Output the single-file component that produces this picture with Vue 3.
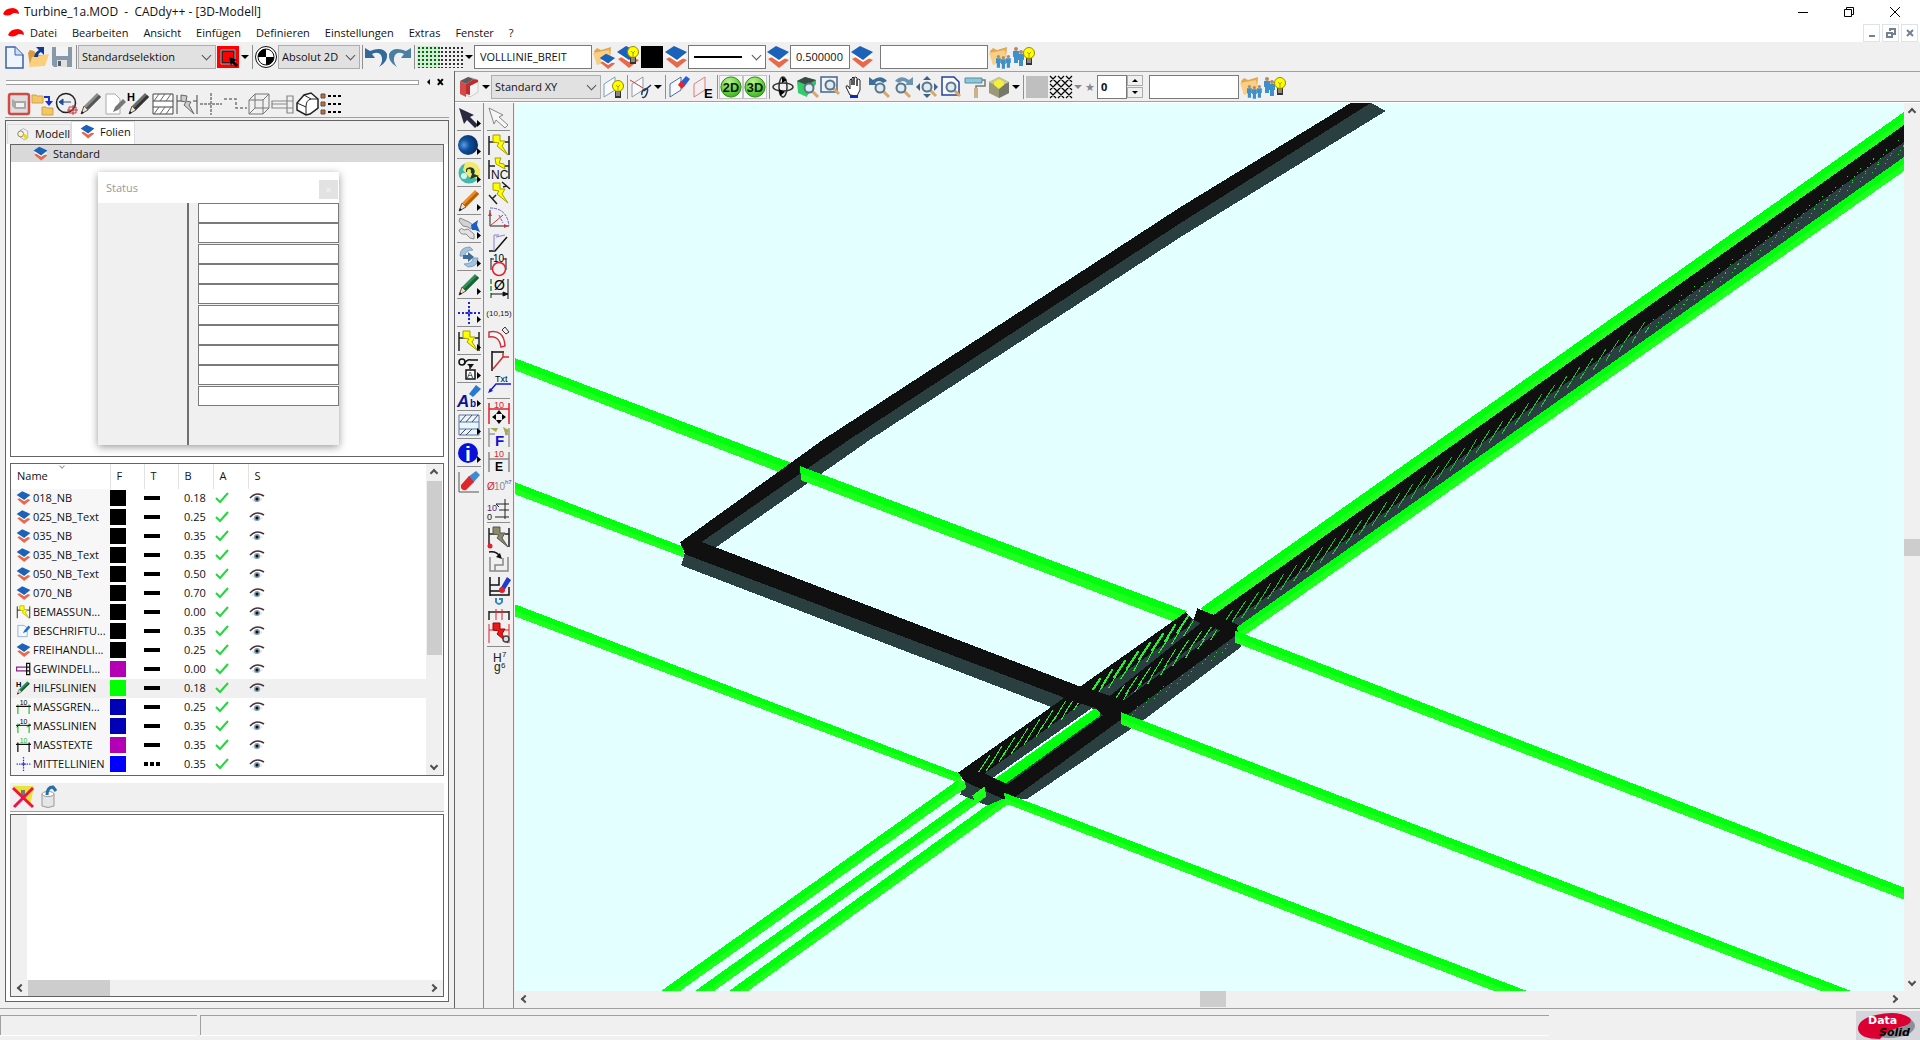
<script setup>
const layers =
  '<path d="M2 14 L10 10 L23 15 L13 23Z" fill="#e8694a"/><path d="M2 10 L12 8 L23 11 L13 17Z" fill="#fff"/><path d="M1 7 L10 1 L23 7 L13 15Z" fill="#1c62b8"/>'
const bulb = (x, y) =>
  `<g transform="translate(${x} ${y})"><path d="M3 10h6v8H3z" fill="#333"/><path d="M4 13h4M4 15h4" stroke="#ddd"/><circle cx="6" cy="6" r="5.500" fill="#ff0" stroke="#998a00"/><path d="M4 5l2 2 2-2M6 7v4" stroke="#b59b00" fill="none"/></g>`
const folder =
  '<path d="M2 6 L5 3 L9 5 L19 2 L18 14 L5 19Z" fill="#e2a94f"/><path d="M5 20 L1 8 L17 5 L19 16Z" fill="#f8cf85"/>'
const man = (x, y, k = 1) =>
  `<g transform="translate(${x} ${y}) scale(${k})"><circle cx="3" cy="2" r="2" fill="#b08a6a"/><path d="M0 4h6v6H5v6H1v-6H0z" fill="#3f8fc8"/></g>`
const lens = (x, y) =>
  `<g transform="translate(${x} ${y})"><path d="M8 8l6 6" stroke="#d8a76a" stroke-width="3"/><circle cx="5" cy="5" r="4.500" fill="#dcebf4" stroke="#5d7485" stroke-width="2"/></g>`
const pencil = (c, d) =>
  `<path d="M2 22l3-8 4 4z" fill="#f3dcc0" stroke="#555" stroke-width="1"/><path d="M2 22l1-3 2 2z" fill="#111"/><path d="M5 14L18 1l4 4L9 18z" fill="${c}"/><path d="M7 16L20 3l2 2L9 18z" fill="${d}"/>`
const zig = (c, s) =>
  `<path d="M6 2l7 0 0 6 5 0-3 5 6 9-11-9 2-3-6-1z" fill="${c}" stroke="${s}" stroke-width="1"/>`
const dim = (c, x) => `<path d="M2 3v19M22 3v19M2 9h6M18 9h4" stroke="${c}" stroke-width="${x}" fill="none"/>`
const plane = (c) => `<path d="M3 9L14 2v13L3 22z" fill="#f7fbff" stroke="${c}"/>`
const t = (x, y, s, c, txt, extra = '') =>
  `<text x="${x}" y="${y}" font-size="${s}" fill="${c}" font-family="Liberation Sans, Arial, sans-serif" ${extra}>${txt}</text>`

const icons = {
  new: '<path d="M4 2h9l8 8v13H4z" fill="#eef5ff" stroke="#3a5fa8" stroke-width="1.500"/><path d="M13 2v8h8" fill="#cfe0fa" stroke="#3a5fa8"/>',
  open: '<path d="M2 8l2-3 4 1 3 4h9l-2 10-14 1z" fill="#d99a3a"/><path d="M3 22l3-10 17-3-4 12z" fill="#fbcf7c"/><path d="M8 12q1-5 5-7l-3-3h8v8l-3-3q-3 1-3 5z" fill="#103a94"/>',
  save: '<path d="M2 2h20v20H4l-2-2z" fill="#8798a8"/><path d="M6 2h12v9H6z" fill="#f4f4f4"/><path d="M7 15h10v7H7z" fill="#e0e0e0"/><path d="M8 16h3v5H8z" fill="#50606e"/>',
  select: '<path d="M1 1h22v22H1z" fill="#f00"/><path d="M6 6h12v12H6z" fill="none" stroke="#402020" stroke-width="2"/><path d="M5 5h14v14H5z" fill="none" stroke="#7fb3c0"/><path d="M13 12l8 3-3 1 4 4-2 2-4-4-1 3z" fill="#000"/>',
  target: '<circle cx="12" cy="12" r="10.500" fill="#fff" stroke="#111"/><circle cx="12" cy="12" r="8" fill="#fff" stroke="#111"/><path d="M12 12V4a8 8 0 0 0-8 8zM12 12v8a8 8 0 0 0 8-8z" fill="#000"/>',
  undo: '<path d="M1 3v10h10L8 9q6-3 9 1 3 6-2 12 9-5 8-13-4-8-17-3L1 3z" fill="#33699a"/>',
  redo: '<path d="M23 3v10H13l3-4q-6-3-9 1-3 6 2 12-9-5-8-13 4-8 17-3z" fill="#4a7fa3"/>',
  folderLayers: folder + '<g transform="translate(7 8) scale(.7)">' + layers + '</g>',
  layers,
  layersBulb: layers + bulb(11, 1),
  black: '<path d="M1 1h22v22H1z" fill="#000"/>',
  folderPeople: folder + man(8, 10, 0.8) + man(13, 11, 0.8) + man(18, 10, 0.8),
  peopleBulb: man(1, 2) + man(6, 5) + bulb(11, 2),
  red3d: '<path d="M4 6l8-4 9 3v12l-8 5-4-2V9z" fill="#f4f4f4" stroke="#ccc"/><path d="M9 9l8-5 4 1v2l-8 4v9l-4-1z" fill="#c22b2b"/><path d="M3 6l8-4 6 2-8 5z" fill="#5c5c5c"/><path d="M3 6l6 3v13l-6-3z" fill="#d24a4a"/>',
  planeBulb: plane('#7d9dc0') + bulb(11, 5),
  planeLink: plane('#999') + '<path d="M1 5l13 8" stroke="#d33"/><path d="M13 20q-1-4 3-6t2 4-5 4M15 16l7-6" stroke="#223a5c" stroke-width="1.500" fill="none"/>',
  planeErase: plane('#4a6c98') + '<path d="M12 9l7-8 4 3-6 8z" fill="#2a5fd0"/><path d="M11 10l3-4 4 4-3 4z" fill="#e22"/>',
  planeE: '<path d="M3 9L14 2v13L3 22z" fill="none" stroke="#e07a7a"/>' + t(13, 23, 13, '#000', 'E', 'font-weight="bold"'),
  d2: '<circle cx="12" cy="12" r="11" fill="url(#gr)" stroke="#2b7d10"/>' + t(3, 17, 14, '#061f04', '2D', 'font-weight="bold"'),
  d3: '<circle cx="12" cy="12" r="11" fill="url(#gr)" stroke="#2b7d10"/>' + t(3, 17, 14, '#061f04', '3D', 'font-weight="bold"'),
  rotate: '<ellipse cx="12" cy="12" rx="10" ry="4" fill="none" stroke="#333" stroke-width="1.500"/><ellipse cx="12" cy="12" rx="4" ry="10" fill="none" stroke="#333" stroke-width="1.500"/><path d="M8 14l6 3-5 4zM16 5l-5-3v6z" fill="#000"/>',
  boxZoom: '<path d="M2 6l8-4 11 3v4l-9 12-9-4z" fill="#34c266"/><path d="M2 6l8-4 11 3-9 5z" fill="#3b4a44"/><path d="M3 8l9 3v11l-9-4z" fill="#2fd06a"/>' + lens(9, 8),
  zoomWin: '<path d="M2 2h16v15H2z" fill="#eef3f8" stroke="#46648c" stroke-width="1.500"/>' + lens(6, 5),
  hand: '<path d="M7 20L3 12q0-2 2-1l2 3V5q1-2 2 0v5-7q1-2 2 0v7-7q2-2 3 0v8-6q2-2 3 0v10l-3 6z" fill="#fff" stroke="#222"/><path d="M7 20h8v3H7z" fill="#0a2bc0"/>',
  zoomBack: lens(8, 8) + '<path d="M2 2v8h8L8 8q4-4 8 0l4-2q-6-7-14-1z" fill="#3b6f9c"/>',
  zoomFwd: lens(5, 8) + '<path d="M22 2v8h-8l2-2q-4-4-8 0L4 6q6-7 14-1z" fill="#6c93b0"/>',
  zoomAll: '<path d="M12 1l4 4H8zM12 23l4-4H8zM1 12l4-4v8zM23 12l-4-4v8z" fill="#3b648c"/>' + lens(7, 7),
  zoomPage: '<path d="M3 2h12l5 5v13H3z" fill="#f6f9ff" stroke="#26409a" stroke-width="1.500"/>' + lens(7, 7),
  roller: '<path d="M2 3h17v5H2z" fill="#8fc6d8" stroke="#508fa5"/><path d="M19 5h3v6H13v3" fill="none" stroke="#777" stroke-width="1.500"/><path d="M11 13h4v10h-4z" fill="#cdb18a"/>',
  cube: '<path d="M2 7l10-5 10 5v11l-10 5L2 18z" fill="#9a9a7a"/><path d="M12 12l10-5v11l-10 5z" fill="#77776a"/><path d="M2 7l10-5 10 5-10 5z" fill="#c9c98a"/><path d="M7 7l5-3 5 3v3l-5 4-5-4z" fill="#f5f03a"/>',
  grey: '<path d="M1 1h22v22H1z" fill="#bfbfbf"/>',
  hatch: '<path d="M1 7l6-6M1 15L15 1M1 23L23 1M9 23L23 9M17 23l6-6M17 1l6 6M9 1l14 14M1 1l22 22M1 9l14 14M1 17l6 6" stroke="#000" stroke-width="1.200"/>',
  panelRed: '<rect x="2" y="2" width="20" height="20" rx="2" fill="#ddd" stroke="#cf4b43" stroke-width="2.500"/><path d="M5 7l3 2h11v8H8l-3-3z" fill="#a8a8a8"/><path d="M9 11h8v4H9z" fill="#f2f2f2"/>',
  folders: '<path d="M1 3h4l1 1h6v7H1zM11 15h4l1 1h6v7H11z" fill="#f0c868" stroke="#d5a040"/><path d="M13 5h5v5" stroke="#1733c4" stroke-width="2" fill="none"/><path d="M14 9h8l-4 5z" fill="#1733c4"/>',
  clock: '<circle cx="11" cy="11" r="9.500" fill="none" stroke="#222" stroke-width="1.500"/><path d="M4 10h12M4 10l4-3v6z" stroke="#1c4f95" fill="#1c4f95"/><path d="M14 15h7v6h-7zM12 18h11M18 13v10" stroke="#c33" fill="none"/>',
  pencilGrey: pencil('#8b8b8b', '#555'),
  pagePencil: '<path d="M3 2h9l5 5v15H3z" fill="#fff" stroke="#aaa"/><path d="M10 20l2-5L20 7l3 3-8 8z" fill="#777"/>',
  hPencil: pencil('#6a6a6a', '#333') + t(0, 9, 11, '#000', 'H', 'font-weight="bold"'),
  hatchBox: '<path d="M2 2h20v20H2zM2 9h20M2 15h20" fill="#fff" stroke="#444"/><path d="M3 9l5-7M9 9l5-7M15 9l5-7M3 22l5-7M9 22l5-7M15 22l5-7" stroke="#666"/>',
  dimGrey: dim('#444', 1) + '<path d="M6 3l6 1-1 5 5 1-2 3 5 9-10-9 2-3-5-1z" fill="#ccc" stroke="#666"/>',
  crossGrey: '<path d="M1 12h22M12 1v22" stroke="#777" stroke-width="1.500" stroke-dasharray="3 1"/>',
  stepGrey: '<path d="M1 7h12v9h11" fill="none" stroke="#777" stroke-width="1.500" stroke-dasharray="3 2"/>',
  wireBox: '<path d="M2 8h14v14H2zM8 2h14v14H8zM2 8l6-6M16 8l6-6M2 22l6-6M16 22l6-6" fill="none" stroke="#777"/>',
  bolt: '<path d="M1 9h15v7H1zM1 12h15M16 4h6v17h-6zM16 9h6M16 16h6" fill="none" stroke="#888" stroke-width="1.200"/>',
  prism: '<path d="M2 11l7-8 7-2 7 6v9l-8 6-4 1-9-5z" fill="#fff" stroke="#222" stroke-width="1.500"/><path d="M2 11l9 4v8M11 15q0-7 5-8l7 0M9 3l7 4" fill="none" stroke="#222"/>',
  list: '<path d="M2 2h4v4H2zM2 10h4v4H2zM2 18h4v4H2z" fill="#c96a2c" stroke="#555"/><path d="M9 4h14M9 12h14M9 20h14" stroke="#000" stroke-width="2" stroke-dasharray="3 2"/>',
  arrowDark: '<path d="M2 3l15 7-4 2 8 8-3 3-8-8-3 4z" fill="#2b2940"/>',
  arrowLight: '<path d="M2 3l14 7-4 2 9 8-3 3-9-8-2 4z" fill="#f6f6f6" stroke="#888"/>',
  sphere: '<circle cx="11" cy="12" r="10" fill="url(#gb)"/>',
  snake: '<circle cx="12" cy="12" r="10.500" fill="#45b8ac"/><path d="M8 2a10.500 10.500 0 0 1 13 16l-9-2-6-7z" fill="#f2ea6e"/><path d="M9 8q3-3 7-1 3 3 1 6l5 2-9 3 2-5q-1-3-6-2" fill="#1d3a2c"/><circle cx="12" cy="10" r="2" fill="#f2ea6e"/><circle cx="7" cy="15" r="3" fill="#d4f4ec"/>',
  pencilOrange: pencil('#f08a1c', '#b85d08'),
  pliers: '<path d="M3 1l9 4 4 3-2 4-3-2-5-1-4-5z" fill="#d2d2d2" stroke="#888"/><path d="M14 8l7-5-1 5 3 7-5-2-3 0z" fill="#1c5fc6"/><path d="M2 13q3-3 5 0l4-1 6 5v5l-4-1-4-4q-6 1-7-4z" fill="#e2e2e2" stroke="#888"/>',
  cycle: '<path d="M3 11Q3 2 13 2l3 3q-8 0-8 6zM21 13q0 9-10 9l-4-3q9 0 9-6z" fill="#a3c2dc" stroke="#7ea2c2"/><path d="M6 10h5V7l6 5-6 5v-3H6z" fill="#3d6d96"/>',
  pencilGreen: pencil('#2f8f55', '#1a5f36'),
  crossBlue: '<path d="M1 12h22M12 1v22" stroke="#2222e0" stroke-width="2" stroke-dasharray="2 2"/><path d="M8 12h8M12 8v8" stroke="#2222e0"/>',
  dimYellow: dim('#222', 1.5) + zig('#ff0', '#a0a000'),
  symbolA: '<circle cx="5" cy="5" r="3" fill="none" stroke="#111" stroke-width="1.500"/><path d="M7 7q3-5 7-4h7M13 7v5" stroke="#111" stroke-width="1.500" fill="none"/><path d="M10 7h7l-3 4z" fill="#111"/><path d="M9 13h9v9H9z" fill="#fff" stroke="#111" stroke-width="1.500"/>' + t(10, 21, 9, '#000', 'A'),
  textAb: '<path d="M12 9L19 0l5 4-8 8z" fill="#2879cf"/>' + t(0, 22, 17, '#0b1594', 'A', 'font-weight="bold" font-style="italic"') + t(13, 22, 10, '#0b1594', 'b', 'font-weight="bold"'),
  hatchBlue: '<path d="M2 2h20v20H2z" fill="#eaf4fb" stroke="#5577a5"/><path d="M2 9h20M2 16h20" stroke="#5577a5"/><path d="M3 9l6-7M9 9l6-7M15 9l6-7M3 22l6-6M9 22l6-6" stroke="#446"/>',
  info: '<circle cx="11" cy="12" r="10" fill="#0a10d8"/>' + t(8, 20, 21, '#fff', 'i', 'font-weight="bold"'),
  eraser: '<path d="M2 3v20h20" stroke="#555" fill="none"/><path d="M11 8l8-6 4 4-7 8z" fill="#3f8bd0"/><path d="M4 16l8-9 5 6-8 8q-6 1-5-5z" fill="#e0262a"/>',
  dimNC: dim('#222', 1.5) + '<path d="M8 1h6l-2 5 5 1 1 5-9-5z" fill="#ff0" stroke="#a0a000"/>' + t(4, 22, 12, '#111', 'NC'),
  dimTilt: '<path d="M2 14l8 9M15 1l8 7M5 18l4-4M16 6l4-1" stroke="#222" stroke-width="1.500"/>' + zig('#ff0', '#a0a000'),
  angle: '<path d="M3 21V5M3 21h19" stroke="#222" fill="none"/><path d="M3 21L16 10" stroke="#c33"/><path d="M3 3q17 0 19 18M12 10l4 8" stroke="#6a5fc8" fill="none" stroke-dasharray="3 1"/><path d="M3 7l2 4H1zM21 21l-4-2v4z" fill="#c33"/>',
  slope: '<path d="M2 22h6L20 8" stroke="#111" fill="none" stroke-width="1.500"/><path d="M7 22V6h5M9 8l9-2" stroke="#8a80d0" fill="none"/>',
  dia10: '<path d="M4 5v12M19 5v12M4 6h3M16 6h3" stroke="#111"/><circle cx="12" cy="16" r="6.500" fill="none" stroke="#e0202a" stroke-width="1.500"/>' + t(6, 9, 10, '#000', '10'),
  diaDim: '<path d="M4 2v21" stroke="#2a8d3a" stroke-width="1.500" stroke-dasharray="5 2"/><path d="M21 2v20M4 17h17M21 17l-5-2v4z" stroke="#111" fill="#111"/>' + t(7, 13, 14, '#000', 'Ø'),
  coord: t(12, 15, 8, '#222', '(10,15)', 'text-anchor="middle"'),
  arcRed: '<path d="M2 7q15-3 16 14l-4 1Q12 10 2 12z" fill="#fff" stroke="#d2303a" stroke-width="1.500"/><path d="M15 5l3-3 4 5-3 2z" fill="none" stroke="#333"/>',
  triangle: '<path d="M5 2v20M5 3h12" stroke="#111" stroke-width="1.500" fill="none"/><path d="M6 20L16 8V4M16 8h6" stroke="#d22b2b" fill="none" stroke-width="1.500"/>',
  leader: '<path d="M3 18l6-7h15" stroke="#1717d8" stroke-width="1.500" fill="none"/><path d="M1 20l5-2-3-3z" fill="#1717d8"/>' + t(8, 9, 9, '#000', 'Txt'),
  dimArrows: '<path d="M2 2v21M22 2v21M2 8h20" stroke="#e0202a" stroke-width="1.500"/><path d="M12 9l3 4H9zM12 23l3-4H9zM5 16l4-3v6zM19 16l-4-3v6z" fill="#000"/>' + t(7, 7, 9, '#e0202a', '10'),
  dimF: dim('#999', 1.5) + '<path d="M3 3h8l-2 4zM16 2l6 3-3 6z" fill="#a8a850"/>' + t(8, 21, 15, '#1515d0', 'F', 'font-weight="bold"'),
  dimE: '<path d="M2 3v20M22 3v20M2 10h20" stroke="#888" stroke-width="1.500"/>' + t(7, 8, 9, '#e0202a', '10') + t(8, 22, 12, '#000', 'E', 'font-weight="bold"'),
  fit: t(0, 17, 10, '#e0202a', 'Ø') + t(7, 17, 10, '#888', '10') + t(18, 11, 6, '#4a3ab8', 'h7'),
  ordinate: '<path d="M18 2v20M9 7h13M12 13h10M8 20h14M9 7l3 3" stroke="#222" fill="none"/>' + t(0, 14, 9, '#5a1f7a', '10') + t(0, 23, 9, '#111', '0'),
  dimDot: dim('#222', 1.5) + zig('#8a8a66', '#555') + '<circle cx="3" cy="21" r="2.500" fill="#e0202a"/>',
  move: '<path d="M3 8v14h18V8M8 22v-6h8V9" stroke="#888" fill="none" stroke-width="1.500"/><path d="M2 3q8-1 10 4" stroke="#111" stroke-width="1.500" fill="none"/><path d="M15 10l-6-2 4-4z" fill="#111"/>',
  chain: '<path d="M3 4v19M12 4v8H3M3 18h10M3 22h19v-8" stroke="#111" fill="none" stroke-width="1.500"/><path d="M13 16l7-12 4 3-7 11z" fill="#2039d0"/><circle cx="15" cy="17" r="3" fill="#e0202a"/>',
  split: '<path d="M2 14v9M22 14v9M2 15h20" stroke="#222" stroke-width="1.500"/><path d="M9 12v11M15 12v11M9 15h6" stroke="#e0202a"/><path d="M9 1v4q3 4 6 0V2h-3" fill="none" stroke="#3387c8" stroke-width="2"/>',
  dimRed: dim('#e0202a', 1) + zig('#e81a1a', '#a00') + '<circle cx="19" cy="18" r="3" fill="#ddd" stroke="#444" stroke-width="1.500"/>',
  tolerance: t(6, 13, 12, '#222', 'H') + t(15, 8, 8, '#222', '7') + t(7, 22, 12, '#222', 'g') + t(14, 19, 8, '#222', '6'),
  note: '<path d="M3 3h10l5 4v14H3z" fill="#f5f9ff" stroke="#6b8cc8"/><path d="M11 15l3-5 6-7 3 3-6 7z" fill="#1f6fd0"/>',
  thread: '<path d="M1 9h16v6H1z" fill="#fff" stroke="#90208a" stroke-width="2"/><path d="M17 3h5v18h-5zM17 9h5M17 15h5" fill="#fff" stroke="#111" stroke-width="2"/>',
  hGreen: pencil('#2f8f55', '#1a5f36') + t(0, 10, 12, '#000', 'H', 'font-weight="bold"'),
  mBorder: '<path d="M3 8v15M21 8v15" stroke="#2ac62a" stroke-width="2"/><path d="M0 11h24" stroke="#111" stroke-width="2"/>' + t(6, 8, 11, '#000', '10'),
  mLine: '<path d="M3 8v15M21 8v15" stroke="#2ac62a" stroke-width="2"/><path d="M0 11h24M1 14l5-5M18 14l5-5" stroke="#111" stroke-width="1.500"/>' + t(6, 8, 11, '#000', '10'),
  mText: '<path d="M3 8v15M21 8v15M0 11h24" stroke="#111" stroke-width="2"/>' + t(6, 8, 11, '#1fb51f', '10'),
  clear: '<path d="M2 1h21L19 22z" fill="#e8e337"/><path d="M10 5h4v8h-4z" fill="#777"/><path d="M2 3l20 19M22 3L3 22" stroke="#ee1248" stroke-width="3"/>',
  bin: '<path d="M4 9h12v12q-6 3-12 0z" fill="#e5e5e5" stroke="#999"/><ellipse cx="10" cy="9" rx="6" ry="2.500" fill="#fff" stroke="#999"/><path d="M9 10q0-8 6-8l3 4" fill="none" stroke="#2a6ca8" stroke-width="3"/>',
  model: '<path d="M7 5l6-3 7 4v12l-6 3-7-5z" fill="#f3f3f3" stroke="#888"/><circle cx="8" cy="11" r="5" fill="#fff6c0" stroke="#777" stroke-width="1.500"/><path d="M13 10l7 4-2 8-5-5z" fill="#e8dc20"/>',
}

const menus = ['Datei', 'Bearbeiten', 'Ansicht', 'Einfügen', 'Definieren', 'Einstellungen', 'Extras', 'Fenster', '?']
const dockTools = ['panelRed', 'folders', 'clock', 'pencilGrey', 'pagePencil', 'hPencil', 'hatchBox', 'dimGrey', 'crossGrey', 'stepGrey', 'wireBox', 'bolt', 'prism', 'list']
const toolsA = ['arrowDark', 'sphere', 'snake', 'pencilOrange', 'pliers', 'cycle', 'pencilGreen', 'crossBlue', 'dimYellow', 'symbolA', 'textAb', 'hatchBlue', 'info', 'eraser']
const toolsB = [
  ['arrowLight'],
  ['dimYellow', 'dimNC', 'dimTilt', 'angle', 'slope', 'dia10', 'diaDim', 'coord', 'arcRed', 'triangle', 'leader'],
  ['dimArrows', 'dimF', 'dimE', 'fit', 'ordinate'],
  ['dimDot', 'move', 'chain', 'split', 'dimRed'],
  ['tolerance'],
]
const viewTools = ['rotate', 'boxZoom', 'zoomWin', 'hand', 'zoomBack', 'zoomFwd', 'zoomAll', 'zoomPage', 'roller', 'cube']

const rows = [
  ['layers', '018_NB', '#000', '0.18'],
  ['layers', '025_NB_Text', '#000', '0.25'],
  ['layers', '035_NB', '#000', '0.35'],
  ['layers', '035_NB_Text', '#000', '0.35'],
  ['layers', '050_NB_Text', '#000', '0.50'],
  ['layers', '070_NB', '#000', '0.70'],
  ['dimYellow', 'BEMASSUN...', '#000', '0.00'],
  ['note', 'BESCHRIFTU...', '#000', '0.35'],
  ['layers', 'FREIHANDLI...', '#000', '0.25'],
  ['thread', 'GEWINDELI...', '#b400b4', '0.00'],
  ['hGreen', 'HILFSLINIEN', '#00ff00', '0.18'],
  ['mBorder', 'MASSGREN...', '#0000b4', '0.25'],
  ['mLine', 'MASSLINIEN', '#0000b4', '0.35'],
  ['mText', 'MASSTEXTE', '#b400b4', '0.35'],
  ['crossBlue', 'MITTELLINIEN', '#0000ff', '0.35'],
  ['hatchBox', '', '#000', ''],
]

function strokes(x0, y0, x1, y1, n, lenA, lenB) {
  const out = []
  for (let i = 0; i < n; i++) {
    const k = i / (n - 1)
    const l = lenA + (lenB - lenA) * k
    const x = x0 + (x1 - x0) * k
    const y = y0 + (y1 - y0) * k
    out.push(`M${Math.round(x - 0.53 * l)} ${Math.round(y + 0.85 * l)}L${Math.round(x + 0.53 * l)} ${Math.round(y - 0.85 * l)}`)
  }
  return out.join('')
}
const farHatch = strokes(1226, 619, 1640, 328, 33, 11, 7) + strokes(1232, 621, 1646, 330, 33, 7, 4)
const farDots = strokes(1652, 320, 1894, 147, 20, 9, 8) + strokes(1658, 322, 1900, 150, 20, 6, 6)
const nearHatch = strokes(984, 763, 1072, 701, 8, 11, 11) + strokes(990, 764, 1077, 704, 8, 7, 7)
const midHatch = strokes(1094, 687, 1182, 624, 8, 11, 11)
const midThin = strokes(1100, 689, 1188, 628, 8, 9, 9)
const innerHatch = strokes(1118, 694, 1208, 631, 8, 11, 11) + strokes(1125, 696, 1213, 635, 8, 6, 6)
const edgeDots = strokes(1136, 708, 1226, 646, 9, 8, 8)
</script>

<template>
  <div class="app">
    <svg class="defs" width="0" height="0" aria-hidden="true">
      <defs>
        <radialGradient id="gr" cx=".4" cy=".25" r=".8"><stop offset="0" stop-color="#b8f58a" /><stop offset="1" stop-color="#35b51a" /></radialGradient>
        <radialGradient id="gb" cx=".3" cy=".5" r=".7"><stop offset="0" stop-color="#5aa0e0" /><stop offset=".4" stop-color="#0f4f9c" /><stop offset="1" stop-color="#062c5c" /></radialGradient>
      </defs>
    </svg>

    <header class="title">
      <svg class="swoosh" viewBox="0 0 18 10"><path d="M1 7Q3 1 11 1q6 1 6 6-5-2-7 0-5 3-9 0z" fill="#f00" /></svg>
      <h1>Turbine_1a.MOD&nbsp; -&nbsp; CADdy++ - [3D-Modell]</h1>
      <div class="win">
        <button aria-label="Minimieren"><svg viewBox="0 0 12 12"><path d="M1 6.500h10" /></svg></button>
        <button aria-label="Wiederherstellen"><svg viewBox="0 0 12 12"><path d="M1.500 3.500h7v7h-7zM3.500 3.500v-2h7v7h-2" /></svg></button>
        <button aria-label="Schließen"><svg viewBox="0 0 12 12"><path d="M1 1l10 10M11 1L1 11" /></svg></button>
      </div>
    </header>

    <nav class="menu">
      <svg class="swoosh" viewBox="0 0 18 10"><path d="M1 7Q3 1 11 1q6 1 6 6-5-2-7 0-5 3-9 0z" fill="#f00" /></svg>
      <button v-for="m in menus" :key="m">{{ m }}</button>
      <div class="mdi">
        <button aria-label="Fenster minimieren"><svg viewBox="0 0 12 12"><path d="M3 9h6" /></svg></button>
        <button aria-label="Fenster wiederherstellen"><svg viewBox="0 0 12 12"><path d="M2 6h5v4H2zM5 4V2h5v5H8" /></svg></button>
        <button aria-label="Fenster schließen"><svg viewBox="0 0 12 12"><path d="M3 3l6 6M9 3L3 9" /></svg></button>
      </div>
    </nav>

    <div class="bar main-bar">
      <button v-for="i in ['new', 'open', 'save']" :key="i" class="ico" :aria-label="i"><svg viewBox="0 0 24 24" v-html="icons[i]" /></button>
      <i class="sep" />
      <span class="combo w138"><select aria-label="Selektion"><option>Standardselektion</option></select></span>
      <button class="ico" aria-label="Selektion"><svg viewBox="0 0 24 24" v-html="icons.select" /></button>
      <button class="drop" aria-label="Mehr" />
      <i class="sep" />
      <button class="ico" aria-label="Koordinaten"><svg viewBox="0 0 24 24" v-html="icons.target" /></button>
      <span class="combo w82"><select aria-label="Koordinatenmodus"><option>Absolut 2D</option></select></span>
      <i class="sep" />
      <button v-for="i in ['undo', 'redo']" :key="i" class="ico" :aria-label="i"><svg viewBox="0 0 24 24" v-html="icons[i]" /></button>
      <i class="sep" />
      <button class="raster" aria-label="Raster"><i /><i /></button>
      <button class="drop" aria-label="Rasteroptionen" />
      <input class="field w118" aria-label="Linienart" value="VOLLLINIE_BREIT" />
      <button v-for="i in ['folderLayers', 'layersBulb', 'black', 'layers']" :key="i" class="ico" :aria-label="i"><svg viewBox="0 0 24 24" v-html="icons[i]" /></button>
      <span class="combo white w78"><select aria-label="Strichart"><option /></select><i class="stroke" /></span>
      <button class="ico" aria-label="Folie"><svg viewBox="0 0 24 24" v-html="icons.layers" /></button>
      <input class="field w60" aria-label="Breite" value="0.500000" />
      <button class="ico" aria-label="Folie"><svg viewBox="0 0 24 24" v-html="icons.layers" /></button>
      <input class="field w108 gap" aria-label="Gruppe" />
      <button v-for="i in ['folderPeople', 'peopleBulb']" :key="i" class="ico" :aria-label="i"><svg viewBox="0 0 24 24" v-html="icons[i]" /></button>
    </div>

    <div class="body">
      <aside class="dock">
        <div class="grip"><span /><svg viewBox="0 0 24 10"><path d="M5 2v6L2 5z" fill="#000" /><path d="M13 2l5 6M18 2l-5 6" stroke="#000" stroke-width="2" /></svg></div>
        <div class="dock-tools">
          <button v-for="i in dockTools" :key="i" class="ico" :aria-label="i"><svg viewBox="0 0 24 24" v-html="icons[i]" /></button>
        </div>
        <div class="pages">
          <div class="tabs" role="tablist">
            <button role="tab" aria-selected="false"><svg viewBox="0 0 24 24" v-html="icons.model" />Modell</button>
            <button role="tab" aria-selected="true" class="on"><svg viewBox="0 0 24 24" v-html="icons.layers" />Folien</button>
          </div>
          <div class="box tree">
            <div class="root"><svg viewBox="0 0 24 24" v-html="icons.layers" />Standard</div>
          </div>
          <div class="box list">
            <table>
              <colgroup><col class="c99" /><col class="c34" /><col class="c34" /><col class="c35" /><col class="c35" /><col /></colgroup>
              <thead>
                <tr><th>Name<i class="sort" /></th><th>F</th><th>T</th><th>B</th><th>A</th><th>S</th></tr>
              </thead>
              <tbody>
                <tr v-for="(r, n) in rows" :key="n" :class="{ sel: r[1] === 'HILFSLINIEN' }">
                  <td><span class="name"><svg viewBox="0 0 24 24" v-html="icons[r[0]]" />{{ r[1] }}</span></td>
                  <td><i class="swatch" :style="{ background: r[2] }" /></td>
                  <td><i :class="['dash', { dotted: r[1] === 'MITTELLINIEN' }]" /></td>
                  <td>{{ r[3] }}</td>
                  <td><svg class="mark" viewBox="0 0 16 14"><path d="M2 7l4 4 8-9" fill="none" stroke="#22d83c" stroke-width="2" /></svg></td>
                  <td><svg class="mark" viewBox="0 0 16 14"><path d="M2 9q6-5 12-1-5 6-12 1z" fill="#dfe9ee" /><circle cx="8" cy="8" r="3" fill="#7f9db0" /><circle cx="8" cy="8" r="1.500" fill="#111" /><path d="M1 7q6-7 14-2" fill="none" stroke="#4a3036" stroke-width="1.500" /></svg></td>
                </tr>
              </tbody>
            </table>
            <div class="vs"><i class="up" /><i class="thumb" /><i class="down" /></div>
          </div>
          <div class="strip">
            <button v-for="i in ['clear', 'bin']" :key="i" class="ico" :aria-label="i"><svg viewBox="0 0 24 24" v-html="icons[i]" /></button>
          </div>
          <div class="box out">
            <div class="gutter" />
            <div class="hs"><i class="left" /><i class="thumb" /><i class="right" /></div>
          </div>
        </div>
        <section class="status-win" aria-label="Status">
          <header><h2>Status</h2><button aria-label="Schließen">×</button></header>
          <div class="status-body">
            <div class="labels" />
            <div class="values"><input v-for="n in 10" :key="n" :aria-label="'Wert ' + n" /></div>
          </div>
        </section>
      </aside>

      <main class="work">
        <div class="bar view-bar">
          <button class="ico" aria-label="Ansicht"><svg viewBox="0 0 24 24" v-html="icons.red3d" /></button>
          <button class="drop" aria-label="Ansichten" />
          <span class="combo w110"><select aria-label="Ebene"><option>Standard XY</option></select></span>
          <button class="ico" aria-label="Ebene zeigen"><svg viewBox="0 0 24 24" v-html="icons.planeBulb" /></button>
          <i class="sep" />
          <button class="ico" aria-label="Ebene binden"><svg viewBox="0 0 24 24" v-html="icons.planeLink" /></button>
          <button class="drop" aria-label="Mehr" />
          <i class="sep" />
          <button v-for="i in ['planeErase', 'planeE']" :key="i" class="ico" :aria-label="i"><svg viewBox="0 0 24 24" v-html="icons[i]" /></button>
          <i class="sep" />
          <button v-for="i in ['d2', 'd3']" :key="i" class="ico pressed" :aria-label="i"><svg viewBox="0 0 24 24" v-html="icons[i]" /></button>
          <i class="sep" />
          <button v-for="i in viewTools" :key="i" class="ico" :aria-label="i"><svg viewBox="0 0 24 24" v-html="icons[i]" /></button>
          <button class="drop" aria-label="Darstellung" />
          <i class="sep" />
          <button v-for="i in ['grey', 'hatch']" :key="i" class="ico" :aria-label="i"><svg viewBox="0 0 24 24" v-html="icons[i]" /></button>
          <button class="drop dim" aria-label="Schraffuren" />
          <span class="star">★</span>
          <input class="field w30 bold" aria-label="Winkel" value="0" />
          <span class="spin"><button aria-label="Mehr" class="inc" /><button aria-label="Weniger" /></span>
          <input class="field w90 gap" aria-label="Filter" />
          <button v-for="i in ['folderPeople', 'peopleBulb']" :key="i" class="ico" :aria-label="i"><svg viewBox="0 0 24 24" v-html="icons[i]" /></button>
        </div>

        <div class="stage">
          <div class="col-a">
            <button v-for="i in toolsA" :key="i" :aria-label="i"><svg viewBox="0 0 24 24"><g v-html="icons[i]" /><path v-if="i !== 'eraser'" d="M20 15v7l4-3.500z" fill="#000" /></svg></button>
          </div>
          <div class="col-b">
            <div v-for="(g, n) in toolsB" :key="n" class="group">
              <button v-for="i in g" :key="i" class="ico" :aria-label="i"><svg viewBox="0 0 24 24" v-html="icons[i]" /></button>
            </div>
          </div>
          <div class="view">
            <div class="scene">
              <svg viewBox="515 103 1388 888" preserveAspectRatio="xMinYMin slice" shape-rendering="crispEdges">
                <g fill="#1dff1d">
                  <path d="M515 358L800 466V480L515 370z" />
                  <path d="M515 482L682 546L686 558L515 494z" />
                  <path d="M515 604L959 773L963 784L515 616z" />
                  <path d="M660 991L957 780L966 787L679 991z" />
                  <path d="M694 991L984 785L987 796L713 991z" />
                  <path d="M728 991L1003 793L1010 802L747 991z" />
                  <path d="M1200 608L1903 112V126L1212 617z" />
                </g>
                <g fill="#00ff0c">
                  <path d="M515 358L800 466V473L515 364z" />
                  <path d="M515 482L682 546L684 552L515 488z" />
                  <path d="M515 604L959 773L961 778L515 610z" />
                  <path d="M1200 608L1903 112V119L1206 612z" />
                  <path d="M660 991L957 780L962 783L670 991z" />
                  <path d="M694 991L984 785L985 791L704 991z" />
                  <path d="M728 991L1003 793L1006 798L738 991z" />
                </g>

                <path d="M701 542L848 440L1180 222L1362 103H1371L1385 111L1180 237L869 440L713 549z" fill="#2a4040" />
                <path d="M680 542L822 440L1180 207L1350 103H1370L1180 223L848 440L701 542L708 550L690 556z" fill="#101010" />
                <path d="M685 552L1064 697L1052 707L681 565z" fill="#2a4040" />
                <path d="M680 542L700 541L1082 687L1066 698L685 554z" fill="#101010" />
                <path d="M800 466L1187 611L1175 622L801 480z" fill="#1dff1d" />
                <path d="M800 466L1187 611L1181 616L800 473z" fill="#00ff0c" />

                <path d="M1222 622L1903 141V158L1237 629z" fill="#2a4040" />
                <path d="M1211 616L1903 125V142L1230 622z" fill="#101010" />
                <path :d="farHatch" stroke="#22d838" stroke-opacity=".85" />
                <path :d="farDots" stroke="#22d838" stroke-dasharray="1 4" />

                <path d="M964 780L1190 618L1240 630V647L1140 722L1026 799L1008 796L987 805L960 794z" fill="#2a4040" />
                <path d="M958 772L1185 612L1192 618L1188 626L980 776z" fill="#101010" />
                <path d="M1100 703L1206 618L1220 624L1114 706z" fill="#101010" />
                <path d="M1003 787L1228 624L1237 628L1234 636L1010 800z" fill="#101010" />
                <path :d="nearHatch" stroke="#22f030" />
                <path :d="midHatch" stroke="#22f030" stroke-width="2" />
                <path :d="midThin" stroke="#22f030" />
                <path :d="innerHatch" stroke="#22e838" />
                <path :d="edgeDots" stroke="#22d838" stroke-dasharray="1 4" />
                <path d="M990 779L1091 708L1094 709L993 781z" fill="#e4ffff" />
                <path d="M992 780L1093 709L1100 708V715L1004 784z" fill="#00ff0c" />
                <path d="M1062 697L1082 686L1126 701L1121 716L1105 718L1096 708z" fill="#101010" />
                <path d="M958 772L982 772L1012 786L1010 798L1004 799L964 781z" fill="#101010" />
                <path d="M1197 608L1239 625L1234 635L1193 620z" fill="#101010" />
                <path d="M956 782L964 780L966 787L958 793zM972 795L984 786L986 796L976 803z" fill="#1dff1d" />

                <g fill="#1dff1d">
                  <path d="M1234 630L1903 887V899L1234 642z" />
                  <path d="M1121 712L1852 991H1822L1121 724z" />
                  <path d="M1003 792L1528 991H1495L1008 804z" />
                  <path d="M1236 627L1903 157V171L1240 638z" />
                </g>
                <g fill="#00ff0c">
                  <path d="M1234 630L1903 887V893L1234 636z" />
                  <path d="M1121 712L1852 991H1838L1121 718z" />
                  <path d="M1003 792L1528 991H1512L1005 798z" />
                  <path d="M1236 627L1903 157V164L1238 632z" />
                </g>
              </svg>
            </div>
            <div class="vs"><i class="up" /><i class="thumb" /><i class="down" /></div>
            <div class="hs"><i class="left" /><i class="thumb" /><i class="right" /></div>
          </div>
        </div>
      </main>
    </div>

    <footer class="foot">
      <div class="pane first" />
      <div class="pane second" />
      <svg class="logo" viewBox="0 0 64 29">
        <rect width="64" height="29" fill="#d4d6dc" />
        <ellipse cx="33" cy="15" rx="26" ry="12" fill="#8d8f96" />
        <path d="M2 18Q2 8 20 4 42-1 54 7 58 13 44 16 30 20 24 28 3 28 2 18z" fill="#dc0032" />
        <text x="12" y="13" font-size="11" font-weight="bold" fill="#fff">Data</text>
        <text x="23" y="25" font-size="11" font-weight="bold" font-style="italic" fill="#000">Solid</text>
      </svg>
    </footer>
  </div>
</template>

<style>
body { margin: 0; }
</style>

<style scoped>
.app { height: 100vh; display: flex; flex-direction: column; overflow: hidden; background: #f0f0f0; color: #111; font: 11px/16px "Open Sans", "Noto Sans", sans-serif; }
.app * { box-sizing: border-box; }
.defs { position: absolute; }
button { font: inherit; color: inherit; background: none; border: 0; padding: 0; margin: 0; display: block; }
svg { display: block; }
h1, h2 { font: inherit; margin: 0; }

.title { height: 22px; flex: none; background: #fff; display: flex; align-items: center; padding: 2px 2px 0; }
.swoosh { width: 18px; height: 10px; flex: none; }
.title h1 { margin-left: 4px; font-size: 12px; }
.win { margin-left: auto; display: flex; }
.win button { width: 46px; height: 20px; display: grid; place-items: center; }
.win svg { width: 12px; height: 12px; fill: none; stroke: #000; }
.menu { height: 20px; flex: none; background: #fff; display: flex; align-items: center; padding: 2px 2px 0 7px; gap: 15px; }
.menu .swoosh { margin-right: -10px; }
.mdi { margin-left: auto; display: flex; gap: 2px; }
.mdi button { width: 17px; height: 18px; border: 1px solid #dce3ea; display: grid; place-items: center; }
.mdi svg { width: 12px; height: 12px; fill: none; stroke: #74808e; stroke-width: 2; }

.bar { height: 31px; flex: none; display: flex; align-items: center; padding-left: 2px; }
.main-bar { height: 29px; }
.view-bar { border-top: 1px solid #a0a0a0; border-bottom: 1px solid #a0a0a0; }
.ico { width: 24px; height: 24px; flex: none; }
.ico svg { width: 24px; height: 24px; overflow: visible; }
.pressed { border: 1px solid #c4c4c4; background: #f8f8f8; }
.pressed svg { width: 22px; height: 22px; }
.sep { width: 1px; height: 24px; margin: 0 1px 0 2px; background: #909090; flex: none; }
.drop { width: 10px; height: 24px; flex: none; display: grid; place-items: center; }
.drop::before { content: ""; border: 4px solid transparent; border-top-color: #000; border-bottom: 0; }
.dim::before { border-top-color: #888; }
.combo { position: relative; height: 24px; flex: none; }
.combo select { appearance: none; width: 100%; height: 24px; border: 1px solid #adadad; border-radius: 0; background: #e1e1e1; font: inherit; color: #111; padding: 0 3px; }
.combo::after { content: ""; position: absolute; right: 6px; top: 7px; width: 6px; height: 6px; border: solid #555; border-width: 0 1px 1px 0; transform: rotate(45deg); }
.combo.white select { background: #fff; border-color: #777; }
.stroke { position: absolute; left: 6px; top: 11px; width: 48px; height: 2px; background: #000; }
.field { height: 24px; flex: none; border: 1px solid #7a7a7a; background: #fff; font: inherit; color: #111; padding: 0 5px; border-radius: 0; }
.gap { margin-left: 6px; }
.bold { font-weight: bold; padding: 0 3px; }
.w138 { width: 138px; }
.w82 { width: 82px; }
.w118 { width: 118px; }
.w78 { width: 78px; }
.w60 { width: 60px; }
.w108 { width: 108px; }
.w110 { width: 110px; }
.w30 { width: 30px; }
.w90 { width: 90px; }
.raster { width: 48px; height: 24px; flex: none; display: flex; padding: 1px; }
.raster i { flex: 1; height: 22px; background: radial-gradient(circle at 2px 2px, #333 1px, transparent 1px) 0 0 / 4px 4px; }
.raster i:first-child { background: radial-gradient(circle at 2px 2px, #006a10 1px, #d4ecd4 1px) 0 0 / 4px 4px; }
.star { width: 14px; color: #888; text-align: center; }
.spin { width: 16px; }
.spin button { width: 16px; height: 11px; border: 1px solid #adadad; display: grid; place-items: center; margin: 1px 0; }
.spin button::before { content: ""; border: 3px solid transparent; border-top-color: #000; border-bottom: 0; }
.spin .inc::before { border-top: 0; border-bottom: 3px solid #000; }

.body { flex: 1; min-height: 0; display: flex; }
.dock { position: relative; width: 455px; flex: none; border-right: 1px solid #646464; padding: 1px 5px 6px; display: flex; flex-direction: column; }
.grip { height: 20px; flex: none; display: flex; align-items: center; gap: 6px; padding-left: 1px; }
.grip span { width: 418px; height: 5px; border: 1px solid #a0a0a0; border-left: 0; background: #fff; }
.grip svg { width: 24px; height: 10px; }
.dock-tools { height: 26px; flex: none; display: flex; padding-left: 2px; border-bottom: 1px solid #a0a0a0; }
.pages { flex: 1; min-height: 0; margin-top: 2px; border: 1px solid #646464; background: #fff; padding: 0 4px 4px; display: flex; flex-direction: column; }
.tabs { height: 23px; flex: none; display: flex; align-items: flex-end; background: #f0f0f0; margin: 0 -4px; padding-left: 1px; }
.tabs button { display: flex; align-items: center; height: 20px; width: 64px; gap: 5px; padding: 0 0 1px 8px; border: 1px solid #dcdcdc; border-bottom: 0; white-space: nowrap; }
.tabs .on { height: 23px; background: #fff; gap: 5px; padding: 0 0 3px 8px; }
.tabs svg { width: 15px; height: 15px; }
.box { border: 1px solid #646464; background: #fff; min-height: 0; overflow: hidden; }
.tree { flex: 314 1 0; }
.root { height: 17px; background: #d9d9d9; display: flex; align-items: center; gap: 5px; padding-left: 22px; font-size: 11px; }
.root svg { width: 15px; height: 15px; }
.list { flex: 315 1 0; margin-top: 6px; display: flex; padding-right: 1px; }
.list table { flex: 1; table-layout: fixed; border-collapse: collapse; width: 0; height: 0; }
.c99 { width: 99px; }
.c34 { width: 34px; }
.c35 { width: 35px; }
.list th { position: relative; height: 25px; font-weight: normal; text-align: left; padding: 0 0 0 6px; border-right: 1px solid #e2e2e2; font-size: 11px; }
.list th:last-child { border: 0; }
.sort { position: absolute; left: 49px; top: 0; width: 4px; height: 4px; border: solid #999; border-width: 0 1px 1px 0; transform: rotate(45deg); }
.list td { height: 19px; padding: 0; }
.list td:first-child { background: #f7f7f7; }
.list td:nth-child(4) { padding-left: 6px; }
.list .sel td { background: #f0f0f0; }
.name { display: flex; align-items: center; gap: 2px; padding-left: 5px; white-space: nowrap; overflow: hidden; }
.name svg { width: 15px; height: 16px; flex: none; }
.swatch { display: block; width: 16px; height: 16px; }
.dash { display: block; width: 16px; height: 4px; background: #000; }
.dotted { background: repeating-linear-gradient(90deg, #000 0 4px, #fff 4px 6px); }
.mark { width: 16px; height: 14px; margin-left: 1px; }
.vs { width: 16px; background: #f0f0f0; display: flex; flex-direction: column; align-items: center; justify-content: space-between; padding: 6px 0; }
.hs { height: 16px; background: #f0f0f0; display: flex; align-items: center; justify-content: space-between; padding: 0 7px; }
.up, .down, .left, .right { width: 6px; height: 6px; border: solid #505050; border-width: 2px 2px 0 0; flex: none; }
.up { transform: rotate(-45deg); }
.down { transform: rotate(135deg); }
.left { transform: rotate(-135deg); }
.right { transform: rotate(45deg); }
.thumb { background: #cdcdcd; flex: none; }
.list .vs .thumb { width: 15px; height: 174px; margin: 5px 0 auto; }
.strip { height: 29px; flex: none; margin-top: 7px; background: #f0f0f0; border-bottom: 1px solid #a0a0a0; display: flex; gap: 3px; padding: 2px 0 0 1px; }
.out { flex: 183 1 0; margin-top: 2px; display: flex; flex-direction: column; }
.gutter { flex: 1; width: 16px; background: #f0f0f0; }
.out .hs .thumb { width: 82px; height: 16px; margin: 0 auto 0 4px; }

.status-win { position: absolute; left: 98px; top: 101px; width: 241px; height: 273px; background: #f0f0f0; box-shadow: 0 2px 8px rgba(0, 0, 0, .4); display: flex; flex-direction: column; }
.status-win header { height: 31px; flex: none; background: #fff; display: flex; align-items: center; justify-content: space-between; padding: 0 1px 0 8px; color: #999; }
.status-win h2 { font-size: 11px; }
.status-win button { width: 19px; height: 19px; background: #e2e2e2; color: #f4f4f4; margin-top: 4px; }
.status-body { flex: 1; display: flex; }
.labels { width: 91px; border-right: 2px solid #707070; }
.values { flex: 1; padding-left: 9px; display: flex; flex-direction: column; }
.values input { width: 100%; height: 20px; flex: none; border: 1px solid #7a7a7a; background: #fff; padding: 0 2px; }
.values input:nth-child(3), .values input:nth-child(6), .values input:nth-child(10) { margin-top: 1px; }

.work { flex: 1; min-width: 0; display: flex; flex-direction: column; }
.stage { flex: 1; min-height: 0; display: flex; border-top: 1px solid #fff; }
.col-a { width: 29px; border-right: 1px solid #8c8c8c; padding: 0 2px; }
.col-a button { width: 24px; height: 28px; border-bottom: 1px solid #8c8c8c; display: grid; place-items: center; }
.col-a button:last-child { border: 0; }
.col-a svg { width: 24px; height: 24px; overflow: visible; }
.col-b { width: 30px; border-right: 1px solid #8c8c8c; padding: 2px 3px 0; }
.group + .group { border-top: 1px solid #8c8c8c; margin-top: 1px; padding-top: 2px; }
.view { flex: 1; min-width: 0; display: grid; grid-template: minmax(0, 1fr) 16px / minmax(0, 1fr) 16px; padding: 0 0 1px 1px; }
.scene { background: #e4ffff; overflow: hidden; }
.scene svg { width: 100%; height: 100%; }
.view .vs .thumb { width: 16px; height: 17px; }
.view .hs .thumb { width: 26px; height: 16px; margin-left: 6px; }

.foot { height: 32px; flex: none; border-top: 1px solid #a0a0a0; display: flex; align-items: flex-start; gap: 3px; position: relative; }
.pane { height: 20px; margin-top: 6px; border: solid #a0a0a0; border-width: 1px 0 0 1px; box-shadow: 0 1px #fff; }
.first { width: 197px; }
.second { flex: 1; margin-right: 371px; }
.logo { width: 64px; height: 29px; position: absolute; right: 0; top: 2px; font-family: "DejaVu Sans", sans-serif; }
</style>
